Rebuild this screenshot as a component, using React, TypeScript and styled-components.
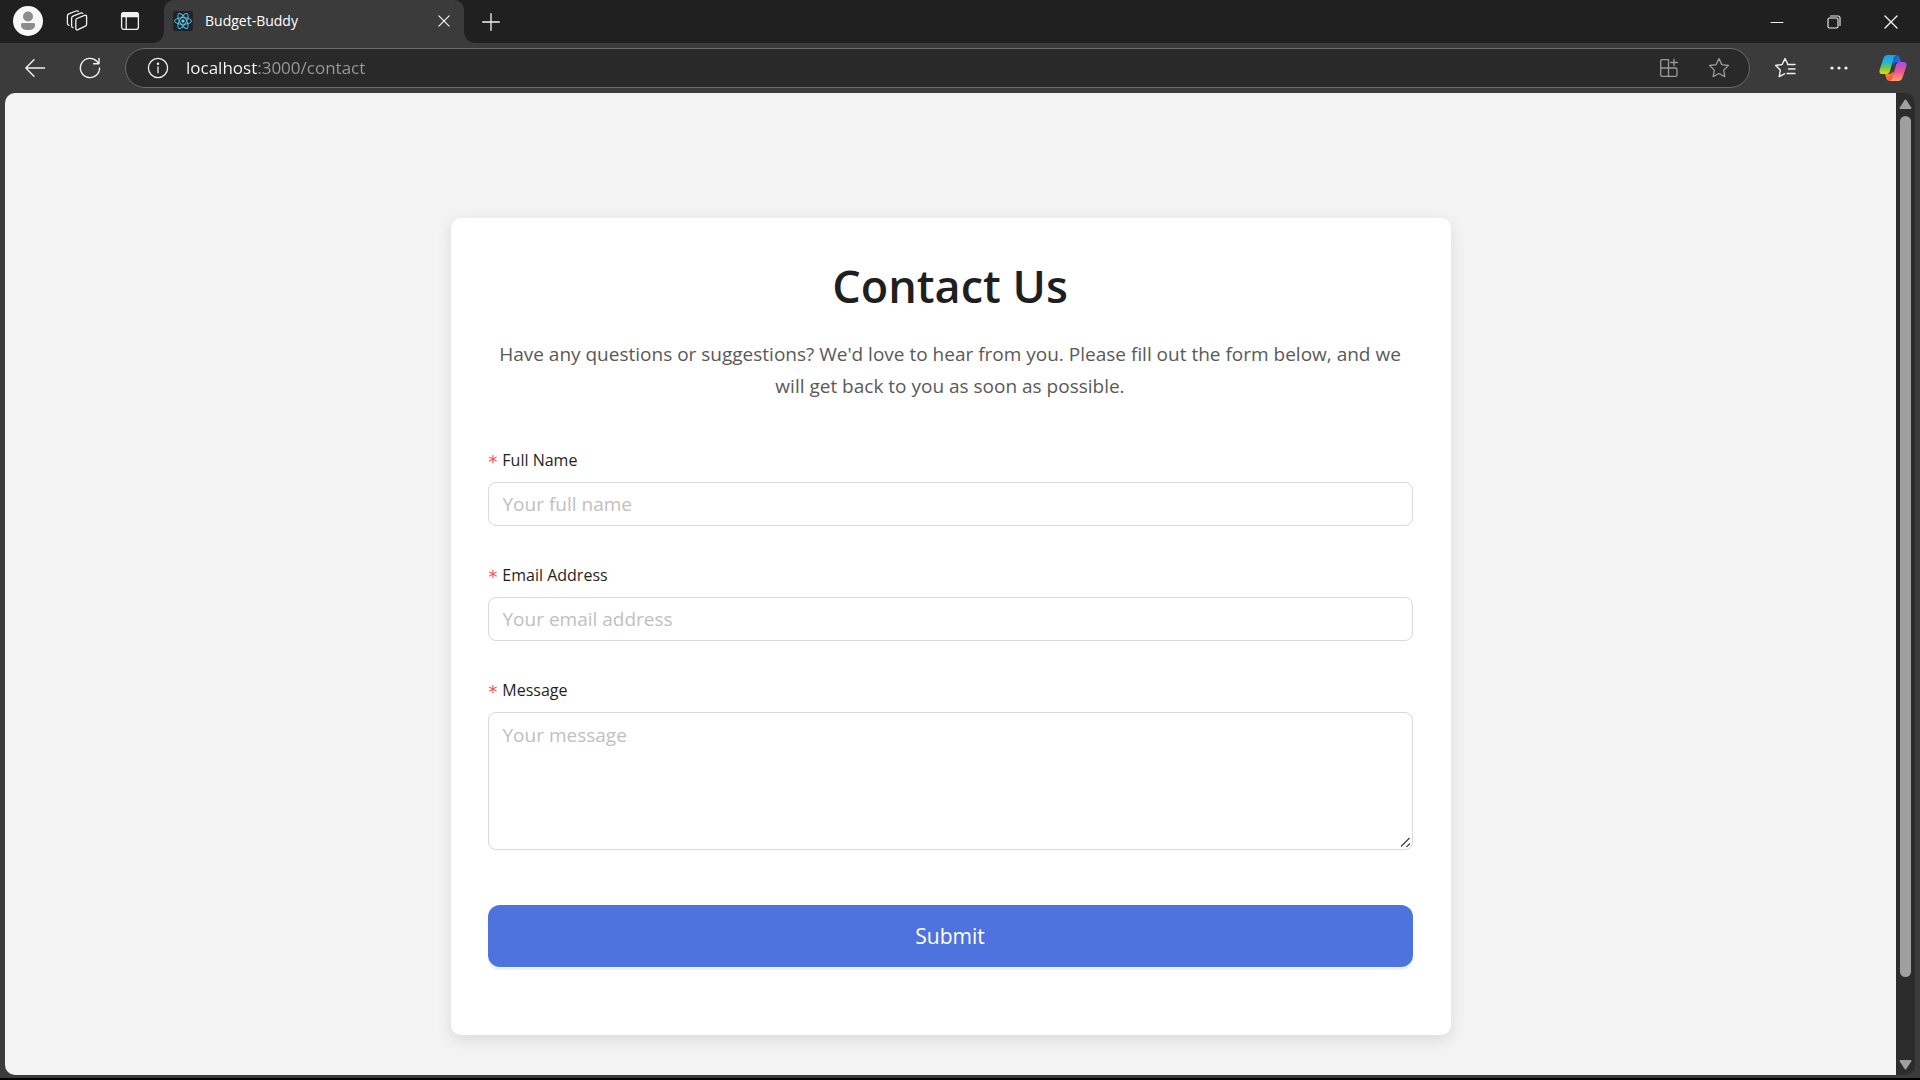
import React from "react";
import styled, { createGlobalStyle } from "styled-components";

const GlobalStyle = createGlobalStyle`
  *, *::before, *::after { box-sizing: border-box; }
  body {
    margin: 0;
    background: #3b3b3b;
    font-family: "Segoe UI", "Open Sans", "Noto Sans", sans-serif;
  }
  button, input, textarea { font-family: inherit; }
`;

const BrowserFrame = styled.div`
  display: flex;
  flex-direction: column;
  min-height: 100vh;
  border-bottom: 2px solid #000;
  background: #3b3b3b;
`;

const TabStrip = styled.header`
  display: flex;
  align-items: center;
  height: 43px;
  padding-left: 12px;
  background: #202020;
`;

const IconButton = styled.button<{ $width?: number; $height?: number; $color?: string }>`
  display: flex;
  align-items: center;
  justify-content: center;
  flex: none;
  width: ${(p) => p.$width ?? 40}px;
  height: ${(p) => p.$height ?? 40}px;
  padding: 0;
  border: 0;
  background: none;
  color: ${(p) => p.$color ?? "#f2f2f2"};
`;

const StripTools = styled.div`
  display: flex;
  align-items: center;
  gap: 13px;
  padding: 0 4px 2px 0;
`;

const Shoulder = styled.span<{ $side: "left" | "right" }>`
  align-self: flex-end;
  flex: none;
  width: 10px;
  height: 10px;
  background: radial-gradient(
    circle at ${(p) => p.$side} top,
    #202020 9px,
    #3b3b3b 10px
  );
`;

const Tab = styled.div`
  display: flex;
  align-items: center;
  gap: 12px;
  width: 300px;
  height: 43px;
  padding: 0 4px 2px 9px;
  border-radius: 10px 10px 0 0;
  background: #3b3b3b;
`;

const TabTitle = styled.span`
  flex: 1;
  color: #fff;
  font-size: 14px;
  line-height: 20px;
`;

const WindowControls = styled.div`
  display: flex;
  margin-left: auto;
`;

const Toolbar = styled.nav`
  display: flex;
  align-items: center;
  height: 50px;
  padding: 0 7px 0 15px;
`;

const NavButtons = styled.div`
  display: flex;
  gap: 15px;
  padding-right: 15px;
`;

const AddressBar = styled.div`
  display: flex;
  align-items: center;
  flex: 1;
  height: 40px;
  padding: 0 10px 0 12px;
  border: 1px solid #6a6a6a;
  border-radius: 20px;
  background: #292929;
`;

const AddressInput = styled.input`
  flex: 1;
  min-width: 0;
  height: 28px;
  padding: 0 0 2px;
  margin-left: 8px;
  border: 0;
  outline: 0;
  color: #fff;
  font-size: 17px;
  background: linear-gradient(90deg, #fff 71px, #9b9b9b 71px);
  background-clip: text;
  -webkit-text-fill-color: transparent;
`;

const AddressActions = styled.div`
  display: flex;
  gap: 10px;
`;

const ToolbarActions = styled.div`
  display: flex;
  gap: 14px;
  padding-left: 15px;
`;

const Viewport = styled.div`
  display: flex;
  flex: 1;
  margin: 0 5px 3px;
  border-radius: 10px;
  overflow: hidden;
`;

const Page = styled.main`
  flex: 1;
  padding: 125px 24px 38px;
  background: #f3f3f3;
`;

const ScrollTrack = styled.div`
  display: flex;
  flex-direction: column;
  align-items: center;
  justify-content: space-between;
  width: 19px;
  padding: 5px 0;
  background: #2c2c2c;
`;

const ScrollRail = styled.div`
  display: flex;
  flex: 1;
  flex-direction: column;
  width: 11px;
  padding: 7px 0 82px;
`;

const ScrollThumb = styled.div`
  flex: 1;
  border-radius: 6px;
  background: #9f9f9f;
`;

const Card = styled.section`
  max-width: 1000px;
  margin: 0 auto;
  padding: 38px 38px 68px 37px;
  border-radius: 10px;
  background: #fff;
  box-shadow: 0 5px 15px rgba(0, 0, 0, 0.1);
`;

const Title = styled.h1`
  margin: 0;
  color: #1f1f1f;
  font-size: 45px;
  font-weight: 600;
  line-height: 60px;
  text-align: center;
`;

const Lead = styled.p`
  margin: 22px 0 42px;
  color: #595959;
  font-size: 19px;
  line-height: 32px;
  text-align: center;
`;

const Field = styled.div`
  display: flex;
  flex-direction: column;
  margin-bottom: 33px;
`;

const Label = styled.label`
  display: flex;
  align-items: center;
  gap: 4px;
  margin-bottom: 6px;
  color: #1f1f1f;
  font-size: 16px;
  line-height: 32px;
`;

const Required = styled.span`
  padding-top: 4px;
  color: #ff4d4f;
  font-family: "DejaVu Sans Mono", monospace;
  font-size: 18px;
  line-height: 28px;
`;

const TextInput = styled.input`
  height: 44px;
  padding: 0 14px;
  border: 1px solid #d9d9d9;
  border-radius: 8px;
  background: #fff;
  color: #1f1f1f;
  font-size: 19px;
  &::placeholder { color: #bfbfbf; opacity: 1; }
`;

const TextArea = styled.textarea`
  height: 138px;
  padding: 6px 14px;
  border: 1px solid #d9d9d9;
  border-radius: 8px;
  background: #fff;
  color: #1f1f1f;
  font-size: 19px;
  line-height: 32px;
  resize: vertical;
  &::placeholder { color: #bfbfbf; opacity: 1; }
  &::-webkit-resizer {
    background: linear-gradient(
        135deg,
        transparent 42%,
        #555 44%,
        #555 52%,
        transparent 54%,
        transparent 76%,
        #555 78%,
        #555 86%,
        transparent 88%
      )
      4px 4px / 9px 9px no-repeat;
  }
`;

const SubmitButton = styled.button`
  width: 100%;
  height: 62px;
  margin-top: 22px;
  border: 0;
  border-radius: 12px;
  background: #4e73df;
  box-shadow: 0 3px 0 #e6f4ff;
  color: #fff;
  font-size: 21px;
`;

const stroke = {
  fill: "none",
  stroke: "currentColor",
  strokeLinecap: "round" as const,
  strokeLinejoin: "round" as const,
};

const ProfileIcon = () => (
  <svg width="30" height="30" viewBox="0 0 30 30">
    <circle cx="15" cy="15" r="15" fill="#f7f7f7" />
    <circle cx="15" cy="10.5" r="5" fill="#8c8c8c" />
    <path d="M9.600 17H20.400A1.700 1.700 0 0 1 22.100 18.700C22.100 22 19.500 24 15 24S7.900 22 7.900 18.700A1.700 1.700 0 0 1 9.600 17Z" fill="#8c8c8c" />
  </svg>
);

const WorkspacesIcon = () => (
  <svg width="22" height="22" viewBox="0 0 22 22" {...stroke} strokeWidth="1.300">
    <path d="M11 8.500 18.600 5.400Q20.600 4.700 20.600 6.700V14.300Q20.600 15.600 19.400 16.200L12 19.600Q9.800 20.400 9.800 18.200V10.500Q9.800 9 11 8.500Z" />
    <path d="M7 17.700Q5.600 17.300 5.600 15.700V8.200Q5.600 6.700 7 6.100L14.500 3.100Q16 2.600 16.700 3.400" />
    <path d="M3 15.300Q1.400 14.800 1.400 13.200V6Q1.400 4.500 2.800 3.900L10 1Q11.600.5 12.400 1.300" />
  </svg>
);

const VerticalTabsIcon = () => (
  <svg width="20" height="20" viewBox="0 0 20 20" {...stroke} strokeWidth="1.300">
    <rect x="1.600" y="1.600" width="16.800" height="16.800" rx="2.500" />
    <path d="M1.600 5.500V4.100Q1.600 1.600 4.100 1.600H15.900Q18.400 1.600 18.400 4.100V5.500Z" fill="currentColor" />
    <path d="M6.200 6v12" />
  </svg>
);

const ReactLogo = () => (
  <svg width="20" height="20" viewBox="0 0 20 20">
    <rect width="20" height="20" rx="2" fill="#20232a" />
    <g fill="none" stroke="#53c1de" strokeWidth="1">
      <ellipse cx="10" cy="10" rx="8.500" ry="3.300" />
      <ellipse cx="10" cy="10" rx="8.500" ry="3.300" transform="rotate(60 10 10)" />
      <ellipse cx="10" cy="10" rx="8.500" ry="3.300" transform="rotate(120 10 10)" />
    </g>
    <circle cx="10" cy="10" r="1.600" fill="#61dafb" />
  </svg>
);

const CloseIcon = ({ size }: { size: number }) => (
  <svg width={size} height={size} viewBox="0 0 14 14" {...stroke} strokeWidth="1.400">
    <path d="m1 1 12 12M13 1 1 13" />
  </svg>
);

const PlusIcon = () => (
  <svg width="18" height="18" viewBox="0 0 18 18" {...stroke} strokeWidth="1.300">
    <path d="M9 .7v16.600M.7 9h16.600" />
  </svg>
);

const MinimizeIcon = () => (
  <svg width="14" height="14" viewBox="0 0 14 14" {...stroke}>
    <path d="M1 7.500h12" />
  </svg>
);

const RestoreIcon = () => (
  <svg width="14" height="14" viewBox="0 0 14 14" {...stroke} strokeWidth="1.100">
    <rect x="1" y="3" width="10" height="10" rx="1.500" />
    <path d="M3.500 1H11q2 0 2 2v7.500" />
  </svg>
);

const BackIcon = () => (
  <svg width="22" height="22" viewBox="0 0 22 22" {...stroke} strokeWidth="1.400">
    <path d="M20.500 11H2M10 2.800 1.800 11l8.200 8.200" />
  </svg>
);

const ReloadIcon = () => (
  <svg width="22" height="22" viewBox="0 0 22 22" {...stroke} strokeWidth="1.400">
    <path d="M20.600 11A9.600 9.600 0 1 1 18 4.400L20 6.700M20 1.400v5.300h-5.400" />
  </svg>
);

const InfoIcon = () => (
  <svg width="22" height="22" viewBox="0 0 22 22" {...stroke} strokeWidth="1.300">
    <circle cx="11" cy="11" r="9.600" />
    <path d="M11 9.800v6" />
    <circle cx="11" cy="6.800" r=".6" fill="currentColor" />
  </svg>
);

const AppsIcon = () => (
  <svg width="20" height="20" viewBox="0 0 20 20" {...stroke} strokeWidth="1.300">
    <path d="M9.500 10V1.700H3Q1.700 1.700 1.700 3V17Q1.700 18.300 3 18.300H16.700Q18 18.300 18 17V11.300Q18 10 16.700 10H1.700M9.500 10v8.300M15 1.200v6.600M11.700 4.500h6.600" />
  </svg>
);

const StarIcon = () => (
  <svg width="22" height="22" viewBox="0 0 22 22" {...stroke} strokeWidth="1.300">
    <path d="m11 1.600 2.900 6 6.500.9-4.700 4.600 1.100 6.500-5.800-3.100-5.800 3.100 1.100-6.500L1.600 8.500l6.500-.9Z" />
  </svg>
);

const FavoritesIcon = () => (
  <svg width="22" height="22" viewBox="0 0 22 22" {...stroke} strokeWidth="1.400">
    <path d="M16.500 7.500 13.900 7.300 11 1.600 8.100 7.500 1.600 8.500 6.300 13.100 5.200 19.600 10.500 16.800M13.500 7.500h7.500M14.500 12h6.500M13 16.500h8" />
  </svg>
);

const MoreIcon = () => (
  <svg width="18" height="4" viewBox="0 0 18 4" fill="currentColor">
    <circle cx="2" cy="2" r="1.600" />
    <circle cx="9" cy="2" r="1.600" />
    <circle cx="16" cy="2" r="1.600" />
  </svg>
);

const CopilotIcon = () => (
  <svg width="28" height="26" viewBox="0 0 28 26">
    <defs>
      <linearGradient id="cpLeft" x1="0" y1="0" x2="0" y2="1">
        <stop offset="0" stopColor="#1a9cf0" />
        <stop offset=".4" stopColor="#22b8c8" />
        <stop offset=".7" stopColor="#7ccb3e" />
        <stop offset="1" stopColor="#f5d40a" />
      </linearGradient>
      <linearGradient id="cpRight" x1="0" y1="0" x2="0" y2="1">
        <stop offset="0" stopColor="#9b50ee" />
        <stop offset=".5" stopColor="#ee5391" />
        <stop offset="1" stopColor="#fda263" />
      </linearGradient>
      <linearGradient id="cpTop" x1="0" y1="0" x2="1" y2="1">
        <stop offset="0" stopColor="#0d4fc4" />
        <stop offset="1" stopColor="#2d7bf3" />
      </linearGradient>
      <linearGradient id="cpBottom" x1="0" y1="0" x2="1" y2="1">
        <stop offset="0" stopColor="#fb9d1f" />
        <stop offset="1" stopColor="#ee3e54" />
      </linearGradient>
    </defs>
    <path d="M12 0h5.500Q20 0 20.800 3l1 4h-3.800Q15 7 14 10L12 4Z" fill="url(#cpTop)" />
    <path d="M16 26h-5.500Q8 26 7.200 23l-1-4h3.800Q13 19 14 16l2 6Z" fill="url(#cpBottom)" />
    <path d="M17 0H8.500Q5.500 0 4.200 4L.9 14Q-.8 19 3.500 19H7.500Q10 19 11 16L14.300 4Q15 1 17 0Z" fill="url(#cpLeft)" />
    <path d="M11 26h8.500Q22.500 26 23.800 22L27.100 12Q28.800 7 24.500 7H20.500Q18 7 17 10L13.700 22Q13 25 11 26Z" fill="url(#cpRight)" />
  </svg>
);

const ScrollArrow = ({ down }: { down?: boolean }) => (
  <svg width="13" height="11" viewBox="0 0 13 11" fill="#9f9f9f">
    <path
      d={
        down
          ? "M1.500 1h10Q13 1 12.200 2.400L7.500 9.800Q6.500 11 5.500 9.800L.8 2.400Q0 1 1.500 1Z"
          : "M1.500 11h10Q13 11 12.200 9.600L7.500 2.200Q6.500 1 5.500 2.200L.8 9.600Q0 11 1.500 11Z"
      }
    />
  </svg>
);

const RequiredLabel = ({ htmlFor, children }: { htmlFor: string; children: React.ReactNode }) => (
  <Label htmlFor={htmlFor}>
    <Required>*</Required>
    {children}
  </Label>
);

export default function App() {
  return (
    <>
      <GlobalStyle />
      <BrowserFrame>
        <TabStrip>
          <StripTools>
            <IconButton $width={32} aria-label="Profile"><ProfileIcon /></IconButton>
            <IconButton aria-label="Workspaces"><WorkspacesIcon /></IconButton>
            <IconButton aria-label="Tab actions"><VerticalTabsIcon /></IconButton>
          </StripTools>
          <Shoulder $side="left" />
          <Tab>
            <ReactLogo />
            <TabTitle>Budget-Buddy</TabTitle>
            <IconButton $width={32} $height={32} aria-label="Close tab"><CloseIcon size={12} /></IconButton>
          </Tab>
          <Shoulder $side="right" />
          <IconButton $width={34} aria-label="New tab"><PlusIcon /></IconButton>
          <WindowControls>
            <IconButton $width={57} aria-label="Minimize"><MinimizeIcon /></IconButton>
            <IconButton $width={57} aria-label="Restore"><RestoreIcon /></IconButton>
            <IconButton $width={58} aria-label="Close window"><CloseIcon size={14} /></IconButton>
          </WindowControls>
        </TabStrip>

        <Toolbar>
          <NavButtons>
            <IconButton aria-label="Back"><BackIcon /></IconButton>
            <IconButton aria-label="Refresh"><ReloadIcon /></IconButton>
          </NavButtons>
          <AddressBar>
            <IconButton $height={36} aria-label="Site information"><InfoIcon /></IconButton>
            <AddressInput aria-label="Address" defaultValue="localhost:3000/contact" />
            <AddressActions>
              <IconButton $height={36} $color="#9a9a9a" aria-label="App available"><AppsIcon /></IconButton>
              <IconButton $height={36} $color="#9a9a9a" aria-label="Add to favorites"><StarIcon /></IconButton>
            </AddressActions>
          </AddressBar>
          <ToolbarActions>
            <IconButton aria-label="Favorites"><FavoritesIcon /></IconButton>
            <IconButton aria-label="Settings and more"><MoreIcon /></IconButton>
            <IconButton aria-label="Copilot"><CopilotIcon /></IconButton>
          </ToolbarActions>
        </Toolbar>

        <Viewport>
          <Page>
            <Card>
              <Title>Contact Us</Title>
              <Lead>
                Have any questions or suggestions? We'd love to hear from you. Please fill out the form
                below, and we will get back to you as soon as possible.
              </Lead>
              <form onSubmit={(e) => e.preventDefault()}>
                <Field>
                  <RequiredLabel htmlFor="name">Full Name</RequiredLabel>
                  <TextInput id="name" type="text" placeholder="Your full name" />
                </Field>
                <Field>
                  <RequiredLabel htmlFor="email">Email Address</RequiredLabel>
                  <TextInput id="email" type="email" placeholder="Your email address" />
                </Field>
                <Field>
                  <RequiredLabel htmlFor="message">Message</RequiredLabel>
                  <TextArea id="message" placeholder="Your message" />
                </Field>
                <SubmitButton type="submit">Submit</SubmitButton>
              </form>
            </Card>
          </Page>
          <ScrollTrack>
            <ScrollArrow />
            <ScrollRail>
              <ScrollThumb />
            </ScrollRail>
            <ScrollArrow down />
          </ScrollTrack>
        </Viewport>
      </BrowserFrame>
    </>
  );
}
